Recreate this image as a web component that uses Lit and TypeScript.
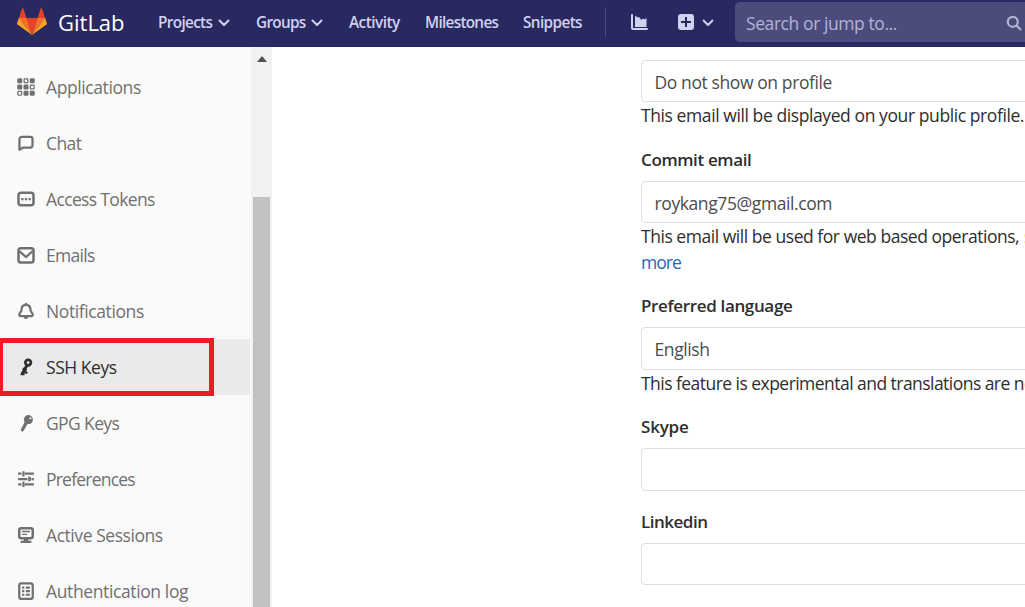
import { LitElement, html, svg, css } from "lit";
import { customElement } from "lit/decorators.js";
import { classMap } from "lit/directives/class-map.js";
import { styleMap } from "lit/directives/style-map.js";

const icons: Record<string, unknown> = {
  applications: svg`<path d="M2 1h2a1 1 0 0 1 1 1v2a1 1 0 0 1-1 1H2a1 1 0 0 1-1-1V2a1 1 0 0 1 1-1zM12 1h2a1 1 0 0 1 1 1v2a1 1 0 0 1-1 1h-2a1 1 0 0 1-1-1V2a1 1 0 0 1 1-1zM2 6h2a1 1 0 0 1 1 1v2a1 1 0 0 1-1 1H2a1 1 0 0 1-1-1V7a1 1 0 0 1 1-1zM7 6h2a1 1 0 0 1 1 1v2a1 1 0 0 1-1 1H7a1 1 0 0 1-1-1V7a1 1 0 0 1 1-1zM7 11h2a1 1 0 0 1 1 1v2a1 1 0 0 1-1 1H7a1 1 0 0 1-1-1v-2a1 1 0 0 1 1-1zM12 11h2a1 1 0 0 1 1 1v2a1 1 0 0 1-1 1h-2a1 1 0 0 1-1-1v-2a1 1 0 0 1 1-1z"/><g fill="none" stroke="currentColor"><rect x="6.5" y="1.5" width="3" height="3" rx=".6"/><rect x="11.5" y="6.5" width="3" height="3" rx=".6"/><rect x="1.5" y="11.5" width="3" height="3" rx=".6"/></g>`,
  chat: svg`<path fill="none" stroke="currentColor" stroke-width="2" stroke-linejoin="round" d="M2.200 14V4.500a2 2 0 0 1 2-2h7.600a2 2 0 0 1 2 2V10a2 2 0 0 1-2 2H5.500z"/>`,
  token: svg`<rect x="2" y="3" width="12" height="10" rx="2" fill="none" stroke="currentColor" stroke-width="2"/><rect x="4.2" y="7.2" width="1.8" height="1.8" rx=".4"/><rect x="7.1" y="7.2" width="1.8" height="1.8" rx=".4"/><rect x="10" y="7.2" width="1.8" height="1.8" rx=".4"/>`,
  mail: svg`<g fill="none" stroke="currentColor" stroke-width="2"><rect x="2" y="2.6" width="12" height="11.4" rx="1.8"/><path stroke-width="1.8" d="M2.8 5l5.2 4.6L13.2 5"/></g>`,
  bell: svg`<path fill="none" stroke="currentColor" stroke-width="2" stroke-linejoin="round" d="M8 2.5c-2.7 0-4 1.900-4 4.600 0 1.900-2 2.500-2 4.100 0 .9.4 1.300 1.200 1.300h9.600c.8 0 1.200-.4 1.200-1.300 0-1.600-2-2.200-2-4.100 0-2.700-1.300-4.600-4-4.600z"/><path d="M7 .8h2v1.800H7zM6 13h4a2 2 0 0 1-4 0z"/>`,
  sshkey: svg`<circle cx="9.9" cy="4.1" r="2.5" fill="none" stroke="currentColor" stroke-width="2.4"/><path fill="none" stroke="currentColor" stroke-width="2.6" d="M8.9 6.5L4.3 14.7"/><path d="M5.6 8.4l3.400 1.800-1 1.800-3.400-1.800zM6.100 11.200l3.600 1.300-.9 1.700-3.500-1.300zM3.700 13l3.500 1.100-.7 1.300H3z"/>`,
  key: svg`<path fill-rule="evenodd" d="M6.800 7.200A4 4 0 1 1 9.400 8.900L5.700 15q-.6.800-1.400.3l-.5-.3q-.7-.5-.3-1.300zM11.500 4.500a.9.900 0 1 0-.1-1.500.9.900 0 0 0 .1 1.500z"/>`,
  sliders: svg`<path d="M1 2.300h3v2H1zM7 2.300h8v2H7zM4.800 1h1.900v4.800H4.800zM1 7h8.300v2H1zM13 7h2v2h-2zM10 5.500l2.500 1.100v2.800L10 10.500zM1 11.700h3v2H1zM7 11.700h8v2H7zM4.800 10.200h1.900V15H4.800z"/>`,
  monitor: svg`<rect x="2" y="2" width="12" height="8.800" rx="1.700" fill="none" stroke="currentColor" stroke-width="2.200"/><path d="M4.500 4.300h7v1.200h-7zM4.500 6.900h4.400v1.200H4.500zM6 11h4v2h2a1 1 0 0 1 0 2H4a1 1 0 0 1 0-2h2z"/>`,
  log: svg`<rect x="2" y="1.200" width="12" height="13.800" rx="2" fill="none" stroke="currentColor" stroke-width="2"/><path d="M4.500 4h2v1.900h-2zM7.800 4h3.700v1.900H7.800zM4.500 7.200h2v1.900h-2zM7.800 7.200h3.700v1.900H7.800zM4.500 10.400h2v1.900h-2zM7.800 10.400h3.700v1.900H7.800z"/>`,
};

interface Item { icon: string; label: string; track: number; small?: boolean; active?: boolean }

const items: Item[] = [
  { icon: "applications", label: "Applications", track: -0.4 },
  { icon: "chat", label: "Chat", track: -0.6, small: true },
  { icon: "token", label: "Access Tokens", track: -0.65 },
  { icon: "mail", label: "Emails", track: -0.72 },
  { icon: "bell", label: "Notifications", track: -0.4, small: true },
  { icon: "sshkey", label: "SSH Keys", track: -0.45, small: true, active: true },
  { icon: "key", label: "GPG Keys", track: -0.62, small: true },
  { icon: "sliders", label: "Preferences", track: -0.78, small: true },
  { icon: "monitor", label: "Active Sessions", track: -0.44, small: true },
  { icon: "log", label: "Authentication log", track: -0.38, small: true },
];

const tracked = (text: string, px: number) =>
  html`<span style=${styleMap({ letterSpacing: `${px}px` })}>${text}</span>`;

const chevron = html`<svg class="chevron" viewBox="0 0 12 8"><path d="M1.500 1.500L6 6l4.500-4.500" fill="none" stroke="currentColor" stroke-width="2" stroke-linecap="round" stroke-linejoin="round"/></svg>`;

@customElement("top-bar")
class TopBar extends LitElement {
  static styles = css`
    :host { display: flex; height: 47px; box-sizing: border-box; background: #292961; color: #d1d1f0; overflow: hidden; font: 600 15.3px/45px "Open Sans", "Noto Sans", sans-serif; white-space: nowrap; }
    svg { display: block; flex: none; }
    .brand { display: flex; width: 158px; padding-left: 17px; box-sizing: border-box; color: #fff; font-size: 22px; line-height: 45px; font-weight: 400; flex: none; }
    .tanuki { width: 30px; height: 28px; margin: 7px 11px 0 0; }
    .link { display: flex; flex: none; box-sizing: border-box; }
    .projects { width: 98px; }
    .groups { width: 93px; }
    .activity { width: 76px; }
    .milestones { width: 98px; }
    .snippets { width: 82px; }
    .chevron { width: 12px; height: 8px; margin: 19px 0 0 auto; }
    .projects .chevron { margin-right: 26px; }
    .groups .chevron { margin-right: 26px; }
    .rule { width: 1px; height: 30px; margin: 7px 25px 0 0; background: #4a4a80; flex: none; }
    .chart { width: 18px; height: 17px; margin: 14px 29px 0 0; }
    .plus { width: 16px; height: 16px; margin: 14px 8px 0 0; }
    .rule ~ .chevron { margin-left: 0; margin-right: 21px; }
    .search { display: flex; box-sizing: border-box; flex: none; width: 300px; height: 40px; margin-top: 2px; padding-left: 11px; border-radius: 5px; background: #4c4c7c; color: #b3b3d6; font-size: 17.5px; font-weight: 400; line-height: 43px; }
    .search .text { width: 260px; }
    .lens { width: 16px; height: 16px; margin-top: 13px; }
  `;

  render() {
    return html`
      <div class="brand">
        <svg class="tanuki" viewBox="0 0 30 28">
          <path fill="#e24329" d="M15 28l5.500-17h-11z"/>
          <path fill="#fc6d26" d="M15 28L9.500 11H1.800zM15 28l5.500-17h7.700z"/>
          <path fill="#fca326" d="M1.800 11L.1 16.200q-.3.800.4 1.300L15 28zM28.200 11l1.700 5.200q.3.800-.4 1.300L15 28z"/>
          <path fill="#e24329" d="M1.800 11h7.700L6.200 1.300q-.5-1-1 0zM28.200 11h-7.700l3.300-9.700q.5-1 1 0z"/>
        </svg>
        ${tracked("GitLab", 0)}
      </div>
      <div class="link projects">${tracked("Projects", -0.65)}${chevron}</div>
      <div class="link groups">${tracked("Groups", -0.7)}${chevron}</div>
      <div class="link activity">${tracked("Activity", -0.5)}</div>
      <div class="link milestones">${tracked("Milestones", -0.7)}</div>
      <div class="link snippets">${tracked("Snippets", -0.6)}</div>
      <div class="rule"></div>
      <svg class="chart" viewBox="0 0 18 17"><path fill="currentColor" d="M1 0q1 0 1 1v13h14q1 0 1 1t-1 1H2q-2 0-2-2V1q0-1 1-1zM4 3q0-1 1-1l1.500 1.500L8 3l2.500 3L12 4.500l1.500 1L15.500 4v9H4z"/></svg>
      <svg class="plus" viewBox="0 0 16 16"><path fill="currentColor" fill-rule="evenodd" d="M3 0h10a3 3 0 0 1 3 3v10a3 3 0 0 1-3 3H3a3 3 0 0 1-3-3V3a3 3 0 0 1 3-3zm4 3v4H3v2h4v4h2V9h4V7H9V3z"/></svg>
      ${chevron}
      <div class="search">
        <div class="text">${tracked("Search or jump to...", -0.42)}</div>
        <svg class="lens" viewBox="0 0 16 16"><g fill="none" stroke="currentColor" stroke-width="2.200" stroke-linecap="round"><circle cx="6.800" cy="6.800" r="5"/><path d="M10.800 10.800l3.500 3.500"/></g></svg>
      </div>`;
  }
}

@customElement("side-nav")
class SideNav extends LitElement {
  static styles = css`
    :host { display: flex; width: 272px; flex: none; overflow: hidden; background: #fafafa; color: #707070; font: 400 17.5px/56px "Open Sans", "Noto Sans", sans-serif; white-space: nowrap; }
    .list { width: 250px; padding-top: 12px; flex: none; }
    .item { position: relative; display: flex; height: 56px; padding-left: 16px; gap: 10px; align-items: center; }
    .item svg { width: 20px; height: 20px; flex: none; fill: currentColor; }
    .item svg.small { width: 18px; height: 18px; margin: 0 1px; }
    .active { background: #eaeaea; color: #2e2e2e; }
    .mark { position: absolute; left: -2px; top: -1px; width: 216px; height: 58px; box-sizing: border-box; border: 5px solid #ed1c24; }
    .scroll { display: flex; flex-direction: column; width: 21px; margin-left: 1px; align-items: center; background: #f1f1f1; }
    .up { width: 0; height: 0; margin: 9px 0 135px; border: 5px solid transparent; border-top: 0; border-bottom: 6px solid #505050; flex: none; }
    .thumb { width: 17px; flex: 1; background: #c1c1c1; }
  `;

  render() {
    return html`
      <div class="list">
        ${items.map(i => html`
          <div class=${classMap({ item: true, active: !!i.active })}>
            <svg class=${classMap({ small: !!i.small })} viewBox="0 0 16 16">${icons[i.icon]}</svg>
            ${tracked(i.label, i.track)}
            ${i.active ? html`<div class="mark"></div>` : null}
          </div>`)}
      </div>
      <div class="scroll"><div class="up"></div><div class="thumb"></div></div>`;
  }
}

@customElement("profile-form")
class ProfileForm extends LitElement {
  static styles = css`
    :host { display: block; width: 600px; margin-left: 369px; padding-top: 13px; flex: none; color: #2e2e2e; font: 400 17.5px/26px "Open Sans", "Noto Sans", sans-serif; white-space: nowrap; }
    .group { margin-bottom: 17px; }
    .first { margin-bottom: 18px; }
    .label { height: 35px; line-height: 27px; font-weight: 600; font-size: 17px; }
    .box { box-sizing: border-box; height: 42px; padding-left: 12.5px; border: 1px solid #dfdfdf; border-radius: 4px; line-height: 42px; color: #4c4c4c; }
    .tall { height: 43px; }
    .link { color: #1b69b6; }
    .mark { color: #f5e663; }
  `;

  render() {
    return html`
      <div class="group first">
        <div class="box">${tracked("Do not show on profile", -0.4)}</div>
        <div>${tracked("This email will be displayed on your public profile.", -0.41)}</div>
      </div>
      <div class="group">
        <div class="label">${tracked("Commit email", -0.37)}</div>
        <div class="box">${tracked("roykang75@gmail.com", -0.4)}</div>
        <div>${tracked("This email will be used for web based operations,", -0.46)} <span class="mark">s</span></div>
        <div class="link">${tracked("more", -0.95)}</div>
      </div>
      <div class="group">
        <div class="label">${tracked("Preferred language", -0.35)}</div>
        <div class="box tall">${tracked("English", -0.4)}</div>
        <div>${tracked("This feature is experimental and translations are no", -0.54)}</div>
      </div>
      <div class="group">
        <div class="label">${tracked("Skype", -0.2)}</div>
        <div class="box tall"></div>
      </div>
      <div class="group">
        <div class="label">${tracked("Linkedin", -0.5)}</div>
        <div class="box"></div>
      </div>`;
  }
}

@customElement("app-root")
class AppRoot extends LitElement {
  static styles = css`
    :host { display: flex; flex-direction: column; width: 1025px; height: 607px; overflow: hidden; background: #fff; }
    .body { display: flex; flex: 1; min-height: 0; }
  `;

  render() {
    return html`<top-bar></top-bar><div class="body"><side-nav></side-nav><profile-form></profile-form></div>`;
  }
}
